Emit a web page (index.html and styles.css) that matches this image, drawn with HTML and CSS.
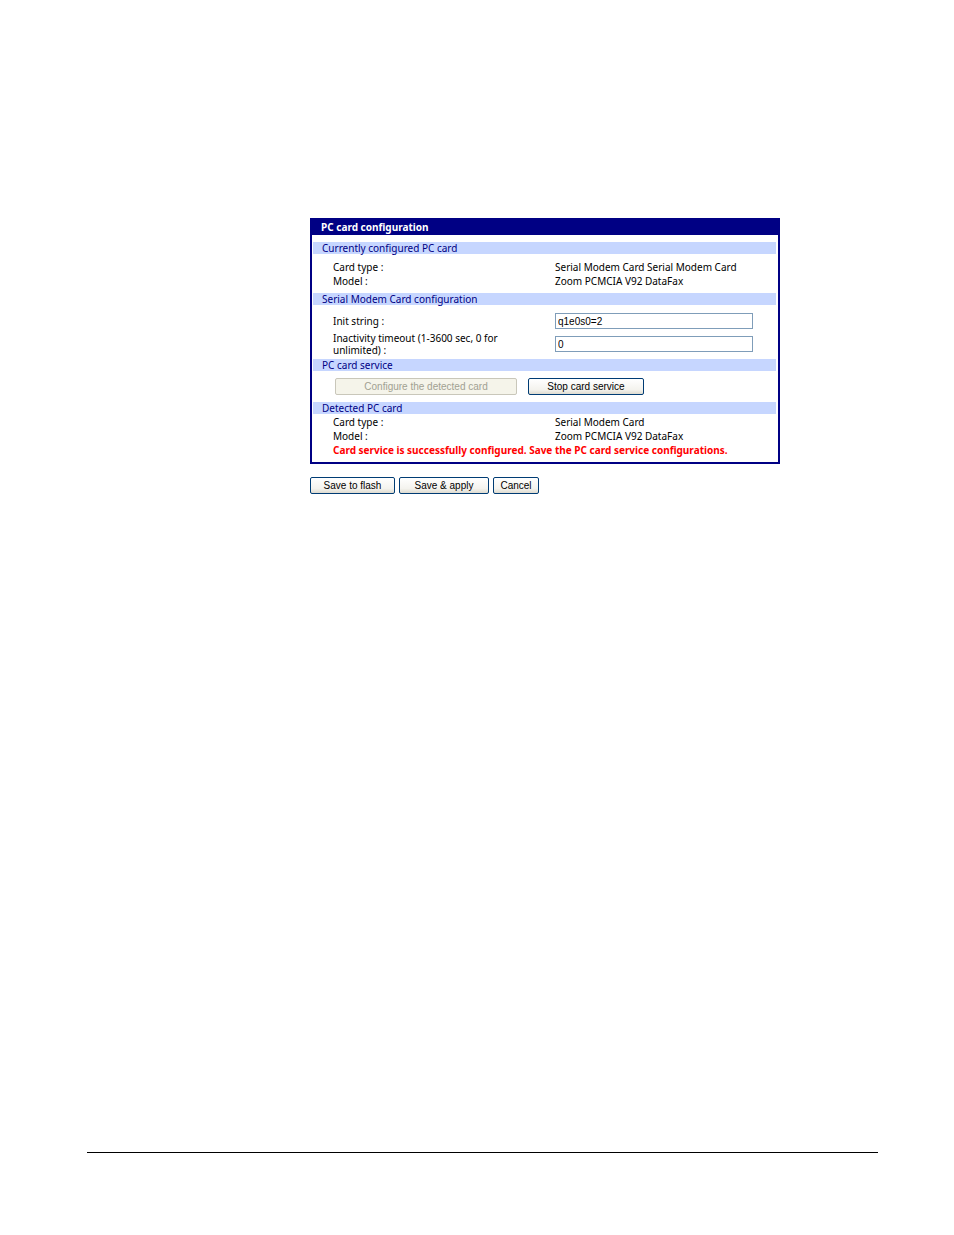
FILE: index.html
```html
<!DOCTYPE html>
<html lang="en">
<head>
  <meta charset="UTF-8">
  <meta name="viewport" content="width=device-width, initial-scale=1.0">
  <title>PC card configuration</title>
  <link rel="stylesheet" href="styles.css">
</head>
<body>
  <main>
    <form>
      <div class="panel">
        <h1>PC card configuration</h1>

        <h2>Currently configured PC card</h2>
        <dl class="info current">
          <dt>Card type :</dt>
          <dd>Serial Modem Card Serial Modem Card</dd>
          <dt>Model :</dt>
          <dd>Zoom PCMCIA V92 DataFax</dd>
        </dl>

        <h2>Serial Modem Card configuration</h2>
        <div class="fields">
          <label for="init-string">Init string :</label>
          <input type="text" id="init-string" value="q1e0s0=2">
          <label for="timeout">Inactivity timeout (1-3600 sec, 0 for unlimited) :</label>
          <input type="text" id="timeout" value="0">
        </div>

        <h2>PC card service</h2>
        <div class="service">
          <button type="button" class="configure" disabled>Configure the detected card</button>
          <button type="button" class="stop">Stop card service</button>
        </div>

        <h2>Detected PC card</h2>
        <dl class="info">
          <dt>Card type :</dt>
          <dd>Serial Modem Card</dd>
          <dt>Model :</dt>
          <dd>Zoom PCMCIA V92 DataFax</dd>
        </dl>
        <p class="message">Card service is successfully configured. Save the PC card service configurations.</p>
      </div>

      <div class="actions">
        <button type="button" class="save">Save to flash</button>
        <button type="button" class="apply">Save &amp; apply</button>
        <button type="button" class="cancel">Cancel</button>
      </div>
    </form>
  </main>
  <footer></footer>
</body>
</html>
```

FILE: styles.css
```css
* {
  box-sizing: border-box;
}

body {
  display: flex;
  flex-direction: column;
  min-height: 100vh;
  margin: 0;
  background: #fff;
  color: #000;
  font-family: "Noto Sans", sans-serif;
  font-size: 10px;
  line-height: 14px;
}

main {
  flex: 1;
  padding: 218px 174px 0 310px;
}

.panel {
  border: 2px solid #000084;
  border-top: none;
  padding-bottom: 5px;
}

h1 {
  margin: 0 0 7px;
  padding: 2px 9px 1px;
  background: #000084;
  color: #fff;
  font-size: 10px;
  font-weight: bold;
}

h2 {
  margin: 0 2px 0 1px;
  padding: 0 9px;
  background: #c6d6ff;
  color: #000084;
  font-size: 10px;
  font-weight: normal;
  line-height: 12px;
}

.info,
.fields {
  display: grid;
  grid-template-columns: 222px 1fr;
  margin: 0;
  padding: 1px 25px 0 21px;
}

.info.current {
  padding-top: 6px;
  padding-bottom: 5px;
}

.info dd {
  margin: 0;
}

.fields {
  align-items: center;
  row-gap: 3px;
  padding-top: 8px;
  padding-bottom: 3px;
}

.fields label {
  max-width: 200px;
  line-height: 12px;
}

input {
  width: 100%;
  height: 16px;
  padding: 0 2px;
  border: 1px solid #7f9db9;
  font-family: Arial, "Liberation Sans", sans-serif;
  font-size: 10px;
}

button {
  height: 17px;
  padding: 0;
  border: 1px solid #003c74;
  border-radius: 2px;
  background: linear-gradient(#fff, #f4f3ee 70%, #dedbd0);
  color: #000;
  font-family: Arial, "Liberation Sans", sans-serif;
  font-size: 10px;
  line-height: 14px;
}

button:disabled {
  border-color: #c9c7ba;
  background: #f5f4ea;
  color: #a1a192;
}

.service {
  display: flex;
  gap: 11px;
  padding: 7px 23px;
}

.configure {
  width: 182px;
}

.stop {
  width: 116px;
}

.message {
  margin: 0;
  padding: 0 21px;
  color: #f00;
  font-weight: bold;
}

.actions {
  display: flex;
  gap: 4px;
  margin-top: 13px;
}

.save {
  width: 85px;
}

.apply {
  width: 90px;
}

.cancel {
  width: 46px;
}

footer {
  margin: 0 76px 82px 87px;
  border-top: 1px solid #000;
}
```
